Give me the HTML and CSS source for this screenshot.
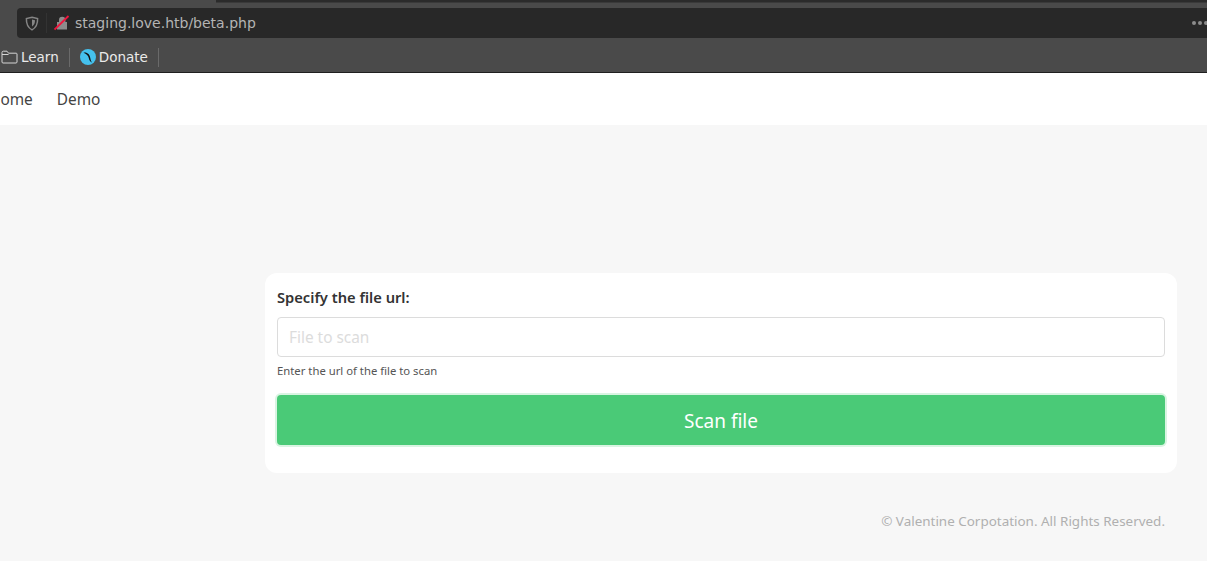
FILE: index.html
```html
<!DOCTYPE html>
<html lang="en">
<head>
<meta charset="utf-8">
<title>Valentine</title>
<link rel="stylesheet" href="styles.css">
</head>
<body>
<header class="chrome">
  <div class="tabstrip"><div class="tab-edge"></div></div>
  <div class="urlrow">
    <div class="urlbar">
      <svg class="shield" width="14" height="15" viewBox="0 0 14 15"><path d="M7 1.200 12.600 2.600c.2 4.800-1.200 8.900-5.600 11.200C2.600 11.500 1.200 7.400 1.400 2.600Z" fill="none" stroke="#858585" stroke-width="1.500"/><path d="M7 3.500 10 4.300c0 2.800-.8 4.800-3 6.300Z" fill="#858585"/></svg>
      <span class="urlsep"></span>
      <svg class="lock" width="16" height="16" viewBox="0 0 16 16"><path d="M5 7V5a3.200 3.200 0 0 1 6.400 0v2h1.600v7.500H3V7Z" fill="#8c8c8c"/><path d="M0.500 14.500 14.500 1" stroke="#f0143c" stroke-width="1.800"/></svg>
      <span class="urltext">staging.love.htb/beta.php</span>
      <span class="dots"><i></i><i></i><i></i></span>
    </div>
  </div>
  <div class="bookmarks">
    <a class="bm">
      <svg width="17" height="14" viewBox="0 0 17 14"><path d="M1 12V2.500C1 1.700 1.500 1.200 2.300 1.200H6l1.500 2h7.700c.5 0 .8.300.8.800V12c0 .6-.4 1-1 1H2c-.6 0-1-.4-1-1ZM1 4.500h6.500" fill="none" stroke="#d4d4d4" stroke-width="1"/></svg>
      <span>Learn</span>
    </a>
    <span class="bmsep"></span>
    <a class="bm">
      <svg width="16" height="16" viewBox="0 0 16 16"><circle cx="8" cy="8" r="8" fill="#45c1ee"/><path d="M3.500 3.700C7 3 9.800 5 10.500 10c.2 1.300.8 2.600 1.600 3.400-1.600-.6-2.800-1.900-3.200-4C8.400 6.600 6.500 4.900 3.500 3.700Z" fill="#111"/></svg>
      <span>Donate</span>
    </a>
    <span class="bmsep"></span>
  </div>
</header>
<nav class="sitenav">
  <a class="home">Home</a>
  <a>Demo</a>
</nav>
<main class="page">
  <form class="card">
    <label class="lbl" for="f">Specify the file url:</label>
    <input class="field" id="f" type="text" placeholder="File to scan">
    <p class="hint">Enter the url of the file to scan</p>
    <button class="scan" type="button">Scan file</button>
  </form>
  <footer class="foot">© Valentine Corpotation. All Rights Reserved.</footer>
</main>
</body>
</html>
```
FILE: styles.css
```css
* { box-sizing: border-box; }
html, body { margin: 0; height: 100%; overflow: hidden; }
body { background: #f7f7f7; font-family: "Noto Sans", sans-serif; color: #333; }

.chrome { height: 73px; background: #4a4a4a; border-bottom: 1px solid #1f1f1f; font-family: "DejaVu Sans", sans-serif; }
.tabstrip { height: 8px; display: flex; justify-content: flex-end; }
.tab-edge { width: 991px; height: 3px; background: #2b2b2b; border-bottom: 1px solid #3a3a3a; }
.urlrow { padding-left: 17px; }
.urlbar { height: 30px; background: #282828; border-radius: 4px 0 0 4px; display: flex; align-items: center; padding-left: 8px; }
.shield { flex: none; }
.urlsep { width: 1px; height: 20px; background: #333; margin: 0 7px 0 7px; }
.lock { flex: none; margin-right: 5px; }
.urltext { color: #b4b4b4; font-size: 14px; line-height: 18px; }
.dots { margin-left: auto; display: flex; gap: 2px; margin-right: -1px; }
.dots i { width: 4px; height: 4px; border-radius: 50%; background: #8c8c8c; }

.bookmarks { height: 34px; display: flex; align-items: center; padding: 4px 0 0 1px; }
.bm { display: flex; align-items: center; gap: 3px; color: #eaeaea; font-size: 13.500px; }
.bmsep { width: 1px; height: 19px; background: #6a6a6a; margin: 0 10px; }

.sitenav { height: 52px; background: #fff; display: flex; align-items: center; gap: 24px; font-size: 15.400px; color: #444; }
.home { margin-left: -11px; }

.page { padding: 148px 30px 0 265px; }
.card { background: #fff; border-radius: 12px; padding: 13px 12px 27px; height: 200px; }
.lbl { display: block; font-weight: 600; font-size: 14.700px; line-height: 22px; color: #333; }
.field { display: block; width: 100%; height: 40px; margin-top: 9px; padding: 0 11px; border: 1px solid #dcdcdc; border-radius: 4px; background: #fff; font: 15.400px "Noto Sans", sans-serif; }
.field::placeholder { color: #dcdcdc; opacity: 1; }
.hint { margin: 6px 0 0; font-size: 11.300px; line-height: 16px; color: #555; }
.scan { display: block; width: 100%; height: 50px; margin-top: 16px; padding: 2px 0 0; border: 0; border-radius: 4px; background: #4aca77; color: #fff; font: 19px "Noto Sans", sans-serif; box-shadow: 0 0 0 2px #d9f4e2; }
.foot { text-align: right; padding-right: 12px; margin-top: 38px; font-size: 13.450px; line-height: 20px; color: #b0b0b0; }
```
